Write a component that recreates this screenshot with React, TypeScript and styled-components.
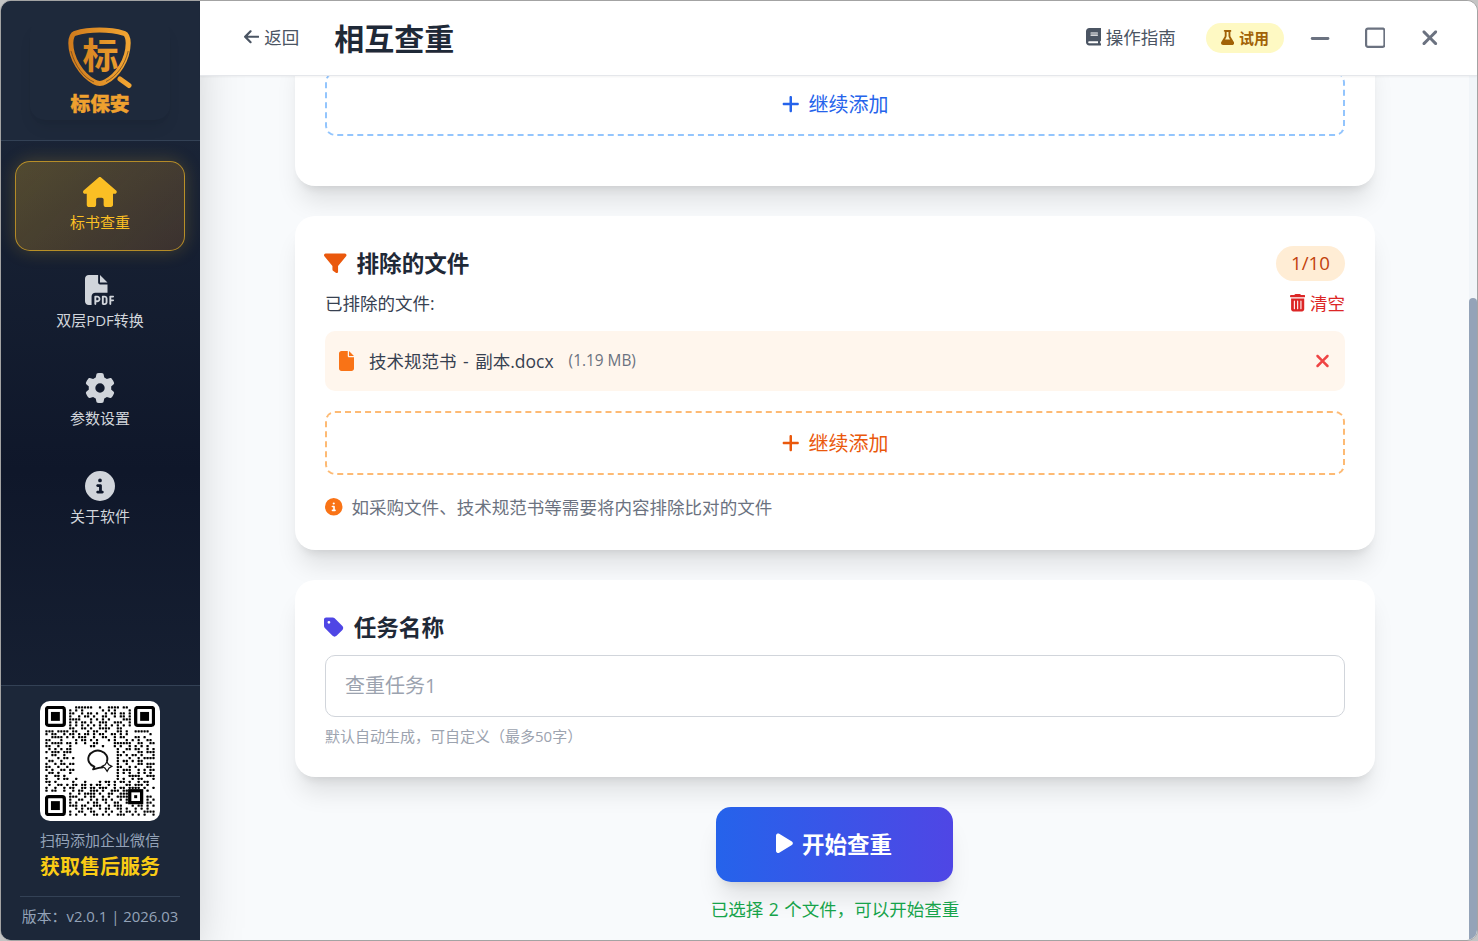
import React from "react";
import styled, { createGlobalStyle, css } from "styled-components";
import {
  FaArrowLeft,
  FaBook,
  FaCircleInfo,
  FaFile,
  FaFilePdf,
  FaFilter,
  FaFlask,
  FaGear,
  FaHouse,
  FaMinus,
  FaPlay,
  FaPlus,
  FaRegSquare,
  FaTag,
  FaTrashCan,
  FaXmark,
} from "react-icons/fa6";

const GlobalStyle = createGlobalStyle`
  *, *::before, *::after { box-sizing: border-box; }
  html, body { margin: 0; padding: 0; overflow: hidden; background: #c4c4c4; }
  body, button, input {
    font-family: "Open Sans", "Noto Sans CJK SC", sans-serif;
  }
  button { border: 0; background: none; padding: 0; cursor: pointer; }
  svg { display: block; flex: none; }
`;

/* Icon box: $ratio is the glyph's own width in 1/512ths of its height. */
const Glyph = styled.span<{ $size: number; $ratio?: number }>`
  display: block;
  flex: none;

  svg {
    width: ${({ $size, $ratio = 512 }) => ($size * $ratio) / 512}px;
    height: ${({ $size }) => $size}px;
  }
`;

const Window = styled.div`
  display: flex;
  width: 1478px;
  height: 941px;
  border: 1px solid #a3a3a3;
  border-radius: 11px;
  overflow: hidden;
  background: #f8fafc;
`;

/* Sidebar */

const Sidebar = styled.aside`
  display: flex;
  flex-direction: column;
  flex: none;
  width: 199px;
  position: relative;
  z-index: 1;
  background: linear-gradient(180deg, #1e293b 0%, #0f172a 50%, #1e293b 100%);
  box-shadow: 0 25px 50px -12px rgba(0, 0, 0, 0.25);
`;

const Brand = styled.div`
  display: flex;
  justify-content: center;
  height: 140px;
  padding: 19px 1px 0 0;
  border-bottom: 1px solid #334155;
  background: #1e293b;
`;

const BrandPlate = styled.div`
  width: 140px;
  height: 100px;
  border-radius: 15px;
  box-shadow: 0 10px 15px -3px rgba(0, 0, 0, 0.08), 0 4px 6px -4px rgba(0, 0, 0, 0.06);
`;

const Nav = styled.nav`
  display: flex;
  flex-direction: column;
  gap: 8px;
  flex: 1;
  padding: 20px 15px 0 14px;
`;

const NavItem = styled.a<{ $active?: boolean }>`
  display: flex;
  flex-direction: column;
  align-items: center;
  gap: 4px;
  height: 90px;
  padding-top: 15px;
  border: 1px solid transparent;
  border-radius: 15px;
  color: #d1d5db;
  font-size: 15px;
  line-height: 23px;
  white-space: nowrap;

  ${({ $active }) =>
    $active &&
    css`
      color: #fbbf24;
      border-color: rgba(251, 191, 36, 0.62);
      background: linear-gradient(135deg, rgba(251, 191, 36, 0.25), rgba(251, 146, 36, 0.16));
      box-shadow: 0 0 18px rgba(251, 191, 36, 0.22);
    `}
`;

const Support = styled.div`
  display: flex;
  flex-direction: column;
  align-items: center;
  height: 255px;
  padding: 15px 20px 0 19px;
  border-top: 1px solid #334155;
  background: #1c2739;
`;

const QrFrame = styled.div`
  width: 120px;
  height: 120px;
  padding: 5px;
  border-radius: 10px;
  background: #fff;
`;

const SupportHint = styled.div`
  margin-top: 8px;
  color: #94a3b8;
  font-size: 15px;
  line-height: 23px;
`;

const SupportTitle = styled.div`
  margin-top: 1px;
  color: #facc15;
  font-size: 20px;
  font-weight: 700;
  line-height: 28px;
`;

const Version = styled.div`
  display: flex;
  justify-content: center;
  align-self: stretch;
  margin-top: 15px;
  padding-top: 8px;
  border-top: 1px solid #334155;
  color: #94a3b8;
  font-size: 14.9px;
  line-height: 23px;
  white-space: nowrap;
`;

/* Main area */

const Main = styled.div`
  display: flex;
  flex-direction: column;
  flex: 1;
  min-width: 0;
`;

const TextButton = styled.button<{ $color: string }>`
  display: flex;
  align-items: center;
  gap: 5px;
  color: ${({ $color }) => $color};
  font-size: 17.5px;
  line-height: 26px;
`;

const TitleBar = styled.header`
  display: flex;
  align-items: center;
  flex: none;
  height: 75px;
  padding: 0 37px 0 44px;
  position: relative;
  z-index: 2;
  border-bottom: 1px solid #e5e7eb;
  background: #fff;
  box-shadow: 0 1px 2px rgba(0, 0, 0, 0.05);

  > ${TextButton} { padding-bottom: 2px; }
`;

const PageTitle = styled.h1`
  margin: 1px auto 0 35px;
  color: #1f2937;
  font-size: 30px;
  font-weight: 700;
  line-height: 40px;
`;

const TrialBadge = styled.div`
  display: flex;
  align-items: center;
  gap: 5px;
  height: 30px;
  margin: 0 26px 0 30px;
  padding: 0 15px 1px;
  border-radius: 15px;
  background: #fef9c3;
  color: #a16207;
  font-size: 15px;
  font-weight: 700;
`;

const WindowControls = styled.div`
  display: flex;
  gap: 35px;
  color: #6b7280;
`;

const ControlButton = styled.button`
  display: flex;
  align-items: center;
  justify-content: center;
  width: 20px;
  height: 30px;
  color: inherit;
`;

const Body = styled.div`
  display: flex;
  flex: 1;
  min-height: 0;
`;

const Content = styled.main`
  display: flex;
  flex-direction: column;
  justify-content: flex-end;
  align-items: center;
  flex: 1;
  min-width: 0;
  padding: 0 0 17px 1px;
`;

const ScrollTrack = styled.div`
  display: flex;
  align-items: flex-end;
  width: 8px;
  background: #f1f5f9;
`;

const ScrollThumb = styled.div`
  width: 8px;
  height: 642px;
  border-radius: 4px 4px 0 0;
  background: #94a3b8;
`;

const Card = styled.section<{ $height: number }>`
  display: flex;
  flex-direction: column;
  flex: none;
  width: 1080px;
  height: ${({ $height }) => $height}px;
  margin-bottom: 30px;
  padding: 30px;
  border-radius: 20px;
  background: #fff;
  box-shadow: 0 20px 25px -5px rgba(0, 0, 0, 0.1), 0 8px 10px -6px rgba(0, 0, 0, 0.1);
`;

const CardRow = styled.div<{ $height: number }>`
  display: flex;
  align-items: center;
  justify-content: space-between;
  flex: none;
  height: ${({ $height }) => $height}px;
`;

const CardTitle = styled.h2<{ $icon: string }>`
  display: flex;
  align-items: center;
  gap: 10px;
  margin: 0 0 0 -1px;
  color: #1f2937;
  font-size: 22.6px;
  font-weight: 700;
  line-height: 36px;

  svg { color: ${({ $icon }) => $icon}; }
`;

const CountBadge = styled.span`
  height: 35px;
  padding: 0 15px;
  border-radius: 18px;
  background: #ffedd5;
  color: #c2410c;
  font-size: 18.7px;
  line-height: 34px;
`;

const RowLabel = styled.span`
  color: #374151;
  font-size: 17.5px;
  line-height: 26px;
`;

const FileRow = styled.div`
  display: flex;
  align-items: center;
  flex: none;
  height: 60px;
  margin-top: 6px;
  padding: 0 15px 1px 14px;
  border-radius: 10px;
  background: #fff6ed;
  color: #f97316;
`;

const FileName = styled.span`
  margin-left: 15px;
  padding-bottom: 1px;
  color: #374151;
  font-size: 17.5px;
  word-spacing: 2px;
`;

const FileSize = styled.span`
  margin: 0 auto 0 15px;
  padding-bottom: 1px;
  color: #6b7280;
  font-size: 15.4px;
`;

const RemoveButton = styled.button`
  display: flex;
  color: #ef4444;
`;

const AddButton = styled.button<{ $tone: "blue" | "orange" }>`
  display: flex;
  align-items: center;
  justify-content: center;
  gap: 9.5px;
  flex: none;
  width: 100%;
  height: 64px;
  padding-bottom: 1px;
  border: 2px dashed ${({ $tone }) => ($tone === "blue" ? "#93c5fd" : "#fdba74")};
  border-radius: 10px;
  color: ${({ $tone }) => ($tone === "blue" ? "#2563eb" : "#ea580c")};
  font-size: 20px;
`;

const Hint = styled.p`
  display: flex;
  align-items: center;
  gap: 9px;
  margin: 19px 0 0;
  color: #6b7280;
  font-size: 17.55px;
  line-height: 26px;

  svg { color: #f97316; }
`;

const NameInput = styled.input`
  flex: none;
  width: 100%;
  height: 62px;
  margin-top: 10px;
  padding: 0 19px 2px;
  border: 1px solid #d1d5db;
  border-radius: 10px;
  outline: none;
  font-size: 20px;

  &::placeholder { color: #9ca3af; opacity: 1; }
`;

const InputHelp = styled.p`
  margin: 8px 0 0;
  color: #9ca3af;
  font-size: 15px;
  line-height: 23px;
`;

const StartButton = styled.button`
  display: flex;
  align-items: center;
  justify-content: center;
  gap: 9px;
  flex: none;
  width: 237px;
  height: 75px;
  margin-right: 2px;
  padding-bottom: 2px;
  border-radius: 15px;
  background: linear-gradient(90deg, #2563eb, #4f46e5);
  box-shadow: 0 20px 25px -5px rgba(0, 0, 0, 0.1), 0 8px 10px -6px rgba(0, 0, 0, 0.1);
  color: #fff;
  font-size: 22.5px;
  font-weight: 700;
`;

const Status = styled.p`
  margin: 14px 0 0;
  color: #16a34a;
  font-size: 17.5px;
  line-height: 27px;
  word-spacing: 1px;
`;

function BrandLogo() {
  return (
    <svg width="140" height="100" viewBox="30 20 140 100">
      <defs>
        <linearGradient id="gold" x1="68" y1="0" x2="132" y2="0" gradientUnits="userSpaceOnUse">
          <stop offset="0" stopColor="#cf7a1c" />
          <stop offset="1" stopColor="#f3a733" />
        </linearGradient>
      </defs>
      <path
        d="M75 33.300C90 29 109 29 124 33.300Q128 35 128.200 43C128 60 117.500 75.500 105.500 81.800Q99.800 85 94 81.800C81 74.500 70.800 58 70.800 43Q71 35 75 33.300Z"
        fill="none"
        stroke="url(#gold)"
        strokeWidth="5"
      />
      <path
        d="M71 51C75 66 84 78 94 82M128.200 51C125 65 116 77 106 81.500"
        fill="none"
        stroke="#5b4027"
        strokeWidth="0.700"
      />
      <path d="M120 79L129 85.600" stroke="url(#gold)" strokeWidth="5" strokeLinecap="round" />
      <text
        x="100.500"
        y="68.500"
        textAnchor="middle"
        fontFamily="Noto Sans CJK SC"
        fontWeight="700"
        fontSize="36"
        fill="url(#gold)"
      >
        标
      </text>
      <text
        x="100"
        y="111"
        textAnchor="middle"
        fontFamily="Noto Sans CJK SC"
        fontWeight="900"
        fontSize="19.700"
        fill="#efa12f"
        stroke="#efa12f"
        strokeWidth="0.400"
      >
        标保安
      </text>
    </svg>
  );
}

const QR_ROWS = [
  "..........######..#..####.##.........",
  "........#.#.#......#.#.#....#........",
  "........##..#.##.#..#.##.##.#........",
  "........#..#.##.#..##..#.##.#........",
  "........####...#.#.#.#....###........",
  "........#.#.##.#..###..###..#........",
  "........#.#.#.#.#.#.#.#.#.#.#........",
  "........##..##.#..####..##...........",
  "###.####.##...#.##..#...##.#..#####..",
  "#.##..#.##.#.##.#.##..##.#.#.......#.",
  "..####.#.#.###..#..##..#.##...##.#...",
  "##...#....#.##.#.#...#.#...#.#.#..##.",
  "#.####.##.#..#..##.....######..##..##",
  "##..#...#......##..#...#.#..#.#.#.#..",
  ".#.#.#.##...............#..##.##..#.#",
  "#.###.###...............#.#....##.###",
  "..##..#.................##.#.##.#...#",
  "#...#.##.#..............#...#..#.####",
  ".##..#..................#.##.#.##....",
  "#..#.##.##..............#..#...##.###",
  "##..#..#................##..#.#...##.",
  "#.#..##.##..............#.###..#.#.##",
  ".##.#...#...............#.#.#..#.#.#.",
  "#..##.#.................#...####..###",
  "#...#.##..#.............#.#..#.##...#",
  "##.#.....#...#....#.##.#.##.#..#.##..",
  ".#..##.#.##.##.#.##..#.#...##.###.#..",
  "#..#..#.##..##.##.###..#.##.####.#..#",
  "#.##..#..#.##..###.#..###.##......#..",
  "........#..#.####.#..##..###.........",
  "........###..#.##..#.#..####......##.",
  "........#..##..#.#.##.#..#.#......#.#",
  "........#.#...#.##..#..##..#......##.",
  "........###.##..###..#.###...#.##.#.#",
  "..........#.#.##..#.##..##.#..#.#.#..",
  "........#..##..##...#.#..#.##.#..####",
  "........#.#..#..##.#.#..###..#.#.#..#",
];

function QrCode() {
  const dots: React.ReactNode[] = [];
  QR_ROWS.forEach((row, y) =>
    row.split("").forEach((cell, x) => {
      if (cell === "#") {
        dots.push(<rect key={`${x}-${y}`} x={x + 0.12} y={y + 0.12} width="0.760" height="0.760" rx="0.200" />);
      }
    })
  );
  return (
    <svg width="110" height="110" viewBox="0 0 37 37">
      {dots}
      {[
        [0, 0],
        [30, 0],
        [0, 30],
      ].map(([x, y]) => (
        <g key={`${x}-${y}`}>
          <rect x={x + 0.5} y={y + 0.5} width="6" height="6" rx="0.700" fill="#fff" stroke="#000" strokeWidth="1.100" />
          <rect x={x + 2} y={y + 2} width="3" height="3" />
        </g>
      ))}
      <rect x="28.500" y="28.500" width="4" height="4" fill="#fff" stroke="#000" strokeWidth="1.100" />
      <rect x="30" y="30" width="1" height="1" />
      <path
        d="M20.800 18.700A3.200 2.800 0 1 0 16.600 20.400L16.200 21.300L18.100 20.800L19.500 20.600"
        fill="none"
        stroke="#111"
        strokeWidth="0.650"
        strokeLinejoin="round"
      />
      <path
        d="M20.800 18.800L21.500 19.800L22.500 20.300L21.500 20.900L20.900 22L20.200 20.900L19.200 20.300L20.200 19.800Z"
        fill="#fff"
        stroke="#111"
        strokeWidth="0.400"
      />
    </svg>
  );
}

export default function App() {
  return (
    <>
      <GlobalStyle />
      <Window>
        <Sidebar>
          <Brand>
            <BrandPlate>
              <BrandLogo />
            </BrandPlate>
          </Brand>
          <Nav>
            <NavItem $active>
              <Glyph $size={30} $ratio={576}><FaHouse /></Glyph>
              标书查重
            </NavItem>
            <NavItem>
              <Glyph $size={30}><FaFilePdf /></Glyph>
              双层PDF转换
            </NavItem>
            <NavItem>
              <Glyph $size={30}><FaGear /></Glyph>
              参数设置
            </NavItem>
            <NavItem>
              <Glyph $size={30}><FaCircleInfo /></Glyph>
              关于软件
            </NavItem>
          </Nav>
          <Support>
            <QrFrame>
              <QrCode />
            </QrFrame>
            <SupportHint>扫码添加企业微信</SupportHint>
            <SupportTitle>获取售后服务</SupportTitle>
            <Version>版本：v2.0.1 | 2026.03</Version>
          </Support>
        </Sidebar>
        <Main>
          <TitleBar>
            <TextButton $color="#4b5563">
              <Glyph $size={17.5} $ratio={448}><FaArrowLeft /></Glyph>
              返回
            </TextButton>
            <PageTitle>相互查重</PageTitle>
            <TextButton $color="#4b5563">
              <Glyph $size={17.5} $ratio={448}><FaBook /></Glyph>
              操作指南
            </TextButton>
            <TrialBadge>
              <Glyph $size={15} $ratio={448}><FaFlask /></Glyph>
              试用
            </TrialBadge>
            <WindowControls>
              <ControlButton>
                <Glyph $size={23} $ratio={448}><FaMinus /></Glyph>
              </ControlButton>
              <ControlButton>
                <Glyph $size={23.5} $ratio={448}><FaRegSquare /></Glyph>
              </ControlButton>
              <ControlButton>
                <Glyph $size={23.5} $ratio={384}><FaXmark /></Glyph>
              </ControlButton>
            </WindowControls>
          </TitleBar>
          <Body>
            <Content>
              <Card $height={144}>
                <AddButton $tone="blue">
                  <Glyph $size={20} $ratio={448}><FaPlus /></Glyph>
                  继续添加
                </AddButton>
              </Card>
              <Card $height={334}>
                <CardRow $height={35}>
                  <CardTitle $icon="#ea580c">
                    <Glyph $size={22.5}><FaFilter /></Glyph>
                    排除的文件
                  </CardTitle>
                  <CountBadge>1/10</CountBadge>
                </CardRow>
                <CardRow $height={44}>
                  <RowLabel>已排除的文件:</RowLabel>
                  <TextButton $color="#dc2626">
                    <Glyph $size={17.5} $ratio={448}><FaTrashCan /></Glyph>
                    清空
                  </TextButton>
                </CardRow>
                <FileRow>
                  <Glyph $size={20} $ratio={384}><FaFile /></Glyph>
                  <FileName>技术规范书 - 副本.docx</FileName>
                  <FileSize>(1.19 MB)</FileSize>
                  <RemoveButton>
                    <Glyph $size={20} $ratio={384}><FaXmark /></Glyph>
                  </RemoveButton>
                </FileRow>
                <CardRow $height={20} />
                <AddButton $tone="orange">
                  <Glyph $size={20} $ratio={448}><FaPlus /></Glyph>
                  继续添加
                </AddButton>
                <Hint>
                  <Glyph $size={17.5}><FaCircleInfo /></Glyph>
                  如采购文件、技术规范书等需要将内容排除比对的文件
                </Hint>
              </Card>
              <Card $height={197}>
                <CardRow $height={35}>
                  <CardTitle $icon="#4f46e5">
                    <Glyph $size={22.5} $ratio={448}><FaTag /></Glyph>
                    任务名称
                  </CardTitle>
                </CardRow>
                <NameInput placeholder="查重任务1" />
                <InputHelp>默认自动生成，可自定义（最多50字）</InputHelp>
              </Card>
              <StartButton>
                <Glyph $size={22.5} $ratio={384}><FaPlay /></Glyph>
                开始查重
              </StartButton>
              <Status>已选择 2 个文件，可以开始查重</Status>
            </Content>
            <ScrollTrack>
              <ScrollThumb />
            </ScrollTrack>
          </Body>
        </Main>
      </Window>
    </>
  );
}
